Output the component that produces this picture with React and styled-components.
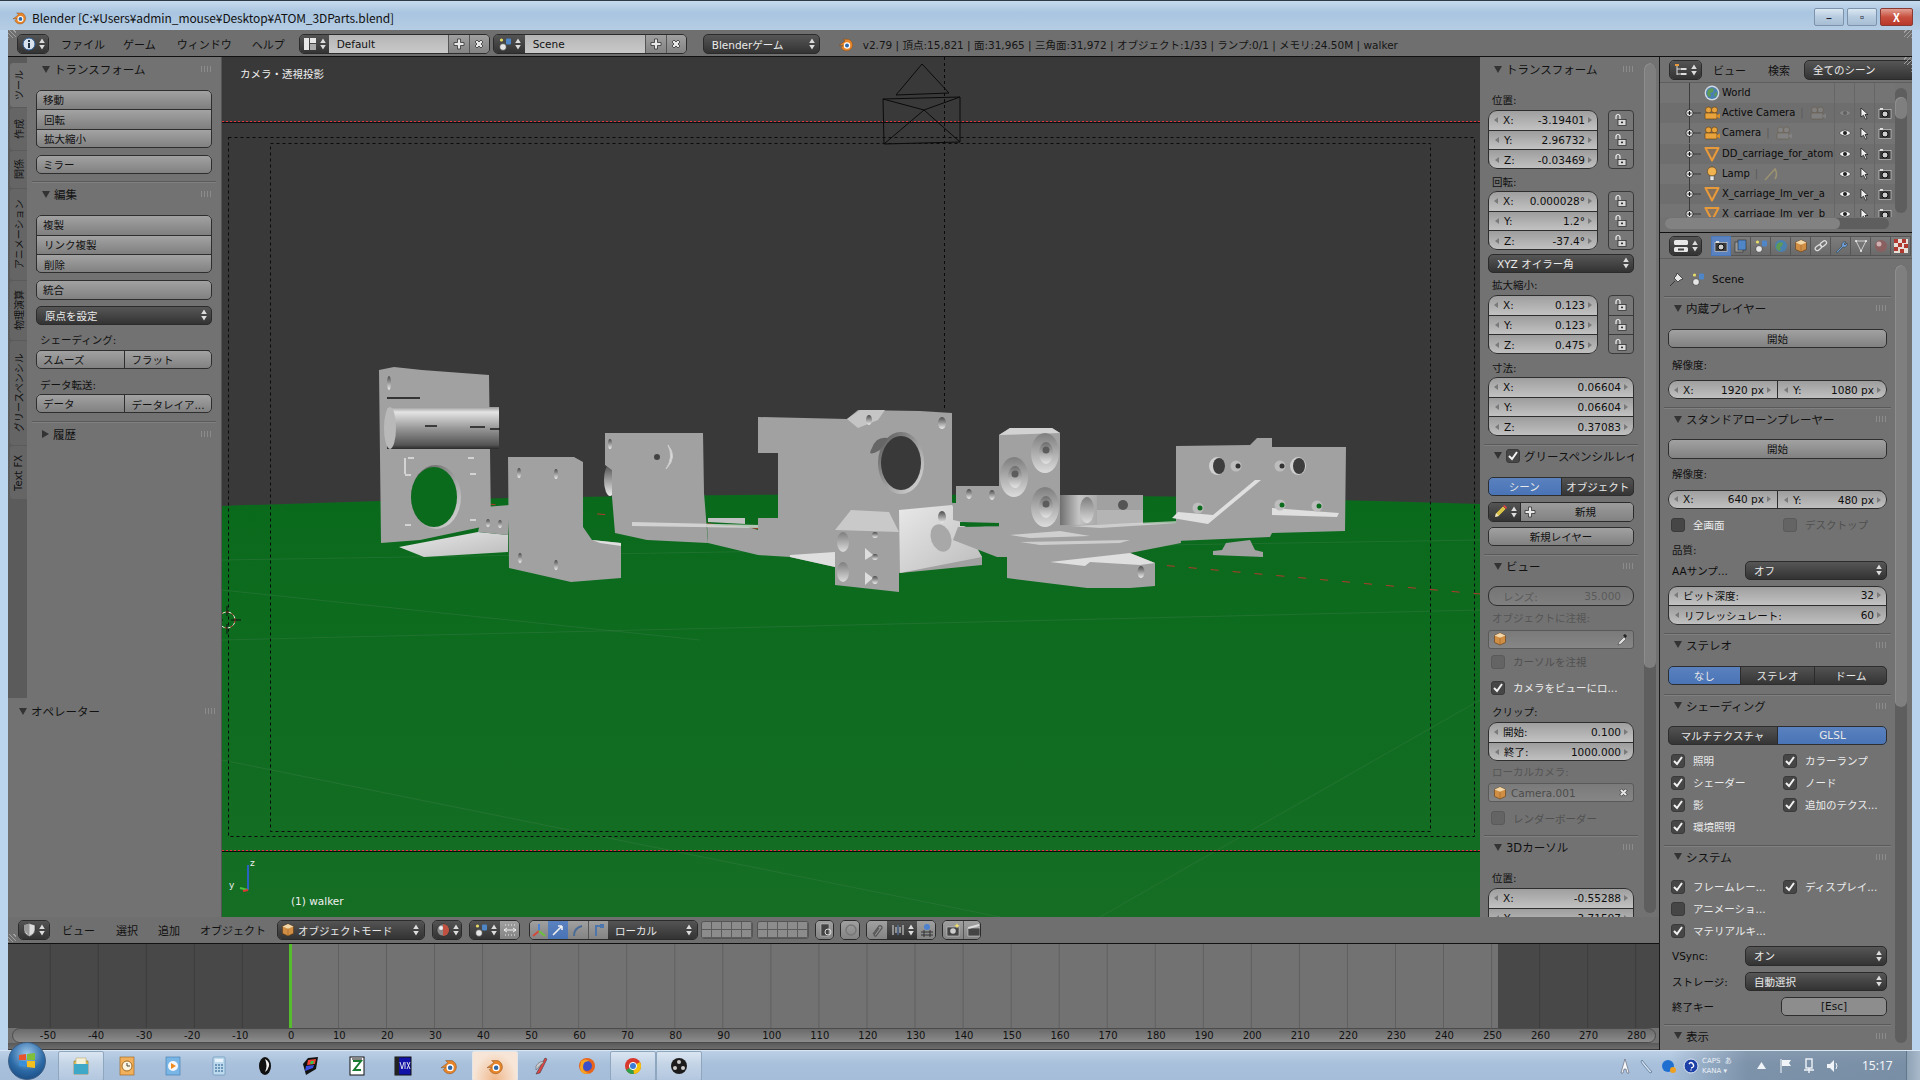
import React from 'react';
import styled, { createGlobalStyle, css } from 'styled-components';

const UI_FONT = `"DejaVu Sans", "Noto Sans CJK JP", sans-serif`;

const GlobalStyle = createGlobalStyle`
  html, body { margin: 0; padding: 0; background: #b9d1ea; }
  * { box-sizing: border-box; }
`;

const spaced = css`
  margin-top: ${p => p.$mt || 0}px;
  margin-left: ${p => p.$ml || 0}px;
`;

const Win = styled.div`
  width: 1920px;
  height: 1080px;
  display: flex;
  flex-direction: column;
  overflow: hidden;
  font-family: ${UI_FONT};
  font-size: 10.5px;
  color: #0c0c0c;
`;

const TitleBar = styled.div`
  height: 30px;
  display: flex;
  align-items: center;
  padding: 3px 0 0 12px;
  background: linear-gradient(#c6dbee, #a9c5e0 40%, #b5cde4);
  border-top: 1px solid #2e3a46;
  font-family: "Noto Sans CJK JP", sans-serif;
  font-size: 12px;
  letter-spacing: -0.1px;
  color: #111;
`;
const TitleText = styled.span`
  margin-left: 5px;
`;
const WinBtns = styled.div`
  margin-left: auto;
  margin-right: 7px;
  display: flex;
  gap: 3px;
`;
const WinBtn = styled.div`
  width: ${p => (p.$close ? '33px' : '30px')};
  height: 18px;
  display: flex;
  align-items: center;
  justify-content: center;
  border: 1px solid ${p => (p.$close ? '#8a3a30' : '#7c93ab')};
  border-radius: 2px;
  color: ${p => (p.$close ? '#fff' : '#223')};
  font-size: 11px;
  font-weight: bold;
  background: ${p => (p.$close
    ? 'linear-gradient(#e2a093, #c8503f 50%, #b8382a)'
    : 'linear-gradient(#dbe7f2, #b7cce0 50%, #a7bdd3)')};
`;

const Frame = styled.div`
  flex: 1;
  display: flex;
  padding: 0 8px;
  background: linear-gradient(90deg, #bcd5ee 8px, transparent 8px), #b8d2ee;
  min-height: 0;
`;
const Blender = styled.div`
  width: 1904px;
  display: flex;
  flex-direction: column;
  background: #727272;
`;

const HeaderBar = styled.div`
  position: relative;
  height: ${p => p.$h || 27}px;
  flex: none;
  display: flex;
  align-items: center;
  background: #6f6f6f;
  border-bottom: 1px solid #111;
  padding-top: ${p => p.$pt ?? 0}px;
`;
const Hatch = styled.div`
  position: absolute;
  width: 8px;
  height: 8px;
  ${p => p.$pos};
  background: repeating-linear-gradient(${p => p.$deg || 45}deg, #a0a0a0 0 1px, transparent 1px 3px);
`;
const Menu = styled.span`
  ${spaced};
  font-size: 11px;
  white-space: nowrap;
  color: #111;
`;
const Joined = styled.div`
  ${spaced};
  display: flex;
  height: 20px;
  width: ${p => (p.$w ? `${p.$w}px` : 'auto')};
  border: 1px solid #2b2b2b;
  border-radius: 5px;
  overflow: hidden;
  flex: none;
`;
const DarkPart = styled.div`
  flex: ${p => (p.$w ? `0 0 ${p.$w}px` : '1')};
  min-height: ${p => p.$h || 0}px;
  display: flex;
  align-items: center;
  justify-content: ${p => (p.$start ? 'flex-start' : 'center')};
  gap: 3px;
  padding: ${p => (p.$start ? '0 5px 0 3px' : '0')};
  color: #e8e8e8;
  white-space: nowrap;
  background: linear-gradient(#545454, #333);
  ${p => p.$active && 'background: linear-gradient(#5b82c0, #4873b5);'}
  ${p => p.$light && 'background: linear-gradient(#9b9b9b, #828282);'}
  & + & { border-left: 1px solid #2b2b2b; }
`;
const TextPart = styled.div`
  flex: 0 0 ${p => p.$w}px;
  display: flex;
  align-items: center;
  padding-left: 8px;
  color: #111;
  background: linear-gradient(#b5b5b5, #c9c9c9);
  border-right: 1px solid #555;
`;
const SmallPart = styled.div`
  flex: 0 0 ${p => p.$w || 20}px;
  display: flex;
  align-items: center;
  justify-content: center;
  background: linear-gradient(#a0a0a0, #838383);
  & + & { border-left: 1px solid #555; }
`;
const Dropdown = styled.div`
  ${spaced};
  flex: ${p => (p.$w ? `0 0 ${p.$w}px` : '1')};
  height: ${p => p.$h || 19}px;
  display: flex;
  align-items: center;
  gap: 4px;
  padding: 0 4px 0 8px;
  border: 1px solid #2b2b2b;
  border-radius: 5px;
  color: #eaeaea;
  white-space: nowrap;
  background: linear-gradient(#565656, #333);
`;
const DropText = styled.span`
  flex: 1;
  overflow: hidden;
`;
const Grow = styled.span`
  flex: 1;
  padding-left: ${p => p.$pl || 0}px;
`;
const LogoSlot = styled.span`
  margin-left: 18px;
  display: flex;
`;
const Stats = styled.span`
  margin-left: 9px;
  font-size: 10.5px;
  color: #151515;
  white-space: nowrap;
`;

const MainRow = styled.div`
  flex: 1;
  display: flex;
  min-height: 0;
`;
const MainCol = styled.div`
  width: 1651px;
  display: flex;
  flex-direction: column;
`;
const ViewRow = styled.div`
  height: 860px;
  display: flex;
`;

/* tool shelf */
const Shelf = styled.div`
  width: 214px;
  display: flex;
  flex-direction: column;
  background: #727272;
  border-right: 1px solid #555;
`;
const ShelfTop = styled.div`
  height: 641px;
  display: flex;
`;
const TabStrip = styled.div`
  width: 19px;
  flex: none;
  padding: 6px 0 0 2px;
  background: #5b5b5b;
  display: flex;
  flex-direction: column;
  gap: 1px;
`;
const Tab = styled.div`
  height: ${p => p.$h}px;
  flex: none;
  display: flex;
  align-items: center;
  justify-content: center;
  writing-mode: vertical-rl;
  text-orientation: sideways;
  transform: rotate(180deg);
  font-size: 10px;
  white-space: nowrap;
  border-radius: 0 3px 3px 0;
  background: ${p => (p.$active ? '#727272' : '#656565')};
  color: #111;
`;
const ShelfPanel = styled.div`
  flex: 1;
  padding: 0 ${p => p.$pad ?? 5}px;
  min-width: 0;
`;
const Section = styled.div`
  padding: 0 4px ${p => p.$pb ?? 8}px;
  ${p => !p.$last && 'border-bottom: 1px solid #5a5a5a; box-shadow: 0 1px 0 #808080;'}
`;
const Head = styled.div`
  height: ${p => p.$h || 22}px;
  display: flex;
  align-items: center;
  gap: 4px;
  padding-left: 5px;
  font-size: 11.5px;
  color: #111;
  white-space: nowrap;
  overflow: hidden;
`;
const Caret = styled.i`
  flex: none;
  width: 0;
  height: 0;
  margin-left: 1px;
  border-style: solid;
  ${p => (p.$closed
    ? 'border-width: 4px 0 4px 7px; border-color: transparent transparent transparent #333;'
    : 'border-width: 7px 4px 0 4px; border-color: #333 transparent transparent transparent;')}
`;
const Grip = styled.i`
  margin-left: auto;
  flex: none;
  width: 11px;
  height: 6px;
  margin-right: 1px;
  background-image: radial-gradient(#a5a5a5 0.7px, transparent 0.8px);
  background-size: 3px 2px;
`;

/* buttons and fields */
const Group = styled.div`
  ${spaced};
  display: flex;
  flex-direction: ${p => (p.$row ? 'row' : 'column')};
  ${p => p.$w && `width: ${p.$w}px; flex: none;`}
  ${p => p.$grow && 'flex: 1;'}
  outline: 1px solid #2e2e2e;
  outline-offset: -1px;
  border-radius: ${p => (p.$round ? 9 : 5)}px;
  overflow: hidden;
`;
const Btn = styled.div`
  flex: ${p => (p.$v ? '1 1 0' : 'none')};
  height: ${p => p.$h || 19.33}px;
  min-width: 0;
  display: flex;
  align-items: center;
  justify-content: ${p => (p.$center ? 'center' : 'flex-start')};
  padding: 0 7px;
  white-space: nowrap;
  overflow: hidden;
  color: #111;
  background: ${p => (p.$flat ? '#8d8d8d' : 'linear-gradient(#a3a3a3, #7f7f7f)')};
  & + & {
    ${p => (p.$v ? 'border-left: 1px solid #2e2e2e;' : 'border-top: 1px solid #2e2e2e;')}
  }
`;
const Num = styled.div`
  flex: ${p => (p.$v ? '1 1 0' : 'none')};
  height: ${p => p.$h || 19.67}px;
  min-width: 0;
  display: flex;
  align-items: center;
  padding: 0 3px;
  white-space: nowrap;
  color: ${p => (p.$off ? '#5a5a5a' : '#0e0e0e')};
  background: ${p => (p.$off
    ? 'linear-gradient(#757575, #808080)'
    : 'linear-gradient(#9d9d9d, #c2c2c2)')};
  & + & {
    ${p => (p.$v ? 'border-left: 1px solid #2e2e2e;' : 'border-top: 1px solid #2e2e2e;')}
  }
`;
const NumArrow = styled.i`
  flex: none;
  width: 0;
  height: 0;
  margin: 0 3px;
  border-style: solid;
  ${p => (p.$right
    ? 'border-width: 3px 0 3px 4px; border-color: transparent transparent transparent #7a7a7a;'
    : 'border-width: 3px 4px 3px 0; border-color: transparent #7a7a7a transparent transparent;')}
`;
const NumLabel = styled.span`
  margin-left: 2px;
`;
const NumValue = styled.span`
  margin-left: auto;
`;
const Label = styled.div`
  ${spaced};
  height: 14px;
  line-height: 14px;
  padding-left: 4px;
  color: ${p => (p.$off ? '#555' : '#111')};
  white-space: nowrap;
`;
const FieldRow = styled.div`
  ${spaced};
  display: flex;
  gap: ${p => p.$gap ?? 10}px;
  align-items: ${p => (p.$center ? 'center' : 'flex-start')};
`;
const RowLabel = styled.div`
  flex: 0 0 ${p => p.$w}px;
  padding-left: 4px;
  white-space: nowrap;
`;
const LockCol = styled.div`
  flex: 0 0 26px;
  display: flex;
  flex-direction: column;
  outline: 1px solid #3a3a3a;
  outline-offset: -1px;
  border-radius: 4px;
  overflow: hidden;
`;
const LockCell = styled.div`
  height: 19.67px;
  flex: none;
  display: flex;
  align-items: center;
  justify-content: center;
  background: #777;
  & + & { border-top: 1px solid #3a3a3a; }
`;
const IdField = styled.div`
  ${spaced};
  height: 19px;
  display: flex;
  align-items: center;
  gap: 4px;
  padding: 0 4px;
  color: #4c4c4c;
  border: 1px solid #5a5a5a;
  border-radius: 3px;
  background: linear-gradient(#7a7a7a, #868686);
`;
const PushRight = styled.span`
  margin-left: auto;
  display: flex;
`;
const CheckRow = styled.div`
  ${spaced};
  height: 18px;
  display: flex;
  align-items: center;
  gap: 8px;
  padding-left: 3px;
  white-space: nowrap;
  color: ${p => (p.$off ? '#505050' : '#ececec')};
`;
const Box = styled.span`
  flex: none;
  width: 14px;
  height: 14px;
  display: flex;
  align-items: center;
  justify-content: center;
  border-radius: 3px;
  background: ${p => (p.$off ? '#646464' : '#464646')};
  border: 1px solid ${p => (p.$off ? '#5a5a5a' : '#3a3a3a')};
`;
const CheckGrid = styled.div`
  ${spaced};
  display: grid;
  grid-template-columns: 112px 1fr;
  row-gap: 4px;
`;
const NewBtnText = styled.span`
  margin-left: 36px;
  color: #111;
`;

/* viewport */
const Viewport = styled.div`
  position: relative;
  width: 1258px;
  flex: none;
  background: #393939;
  overflow: hidden;
`;
const Scene3D = styled.svg`
  display: block;
`;
const ViewCaption = styled.div`
  position: absolute;
  left: ${p => p.$x}px;
  top: ${p => p.$y}px;
  color: #f0f0f0;
  font-size: 10.5px;
  white-space: nowrap;
`;

/* right side panels */
const NPanel = styled.div`
  width: 179px;
  display: flex;
  overflow: hidden;
  background: #727272;
`;
const NContent = styled.div`
  width: 164px;
  flex: none;
  height: 860px;
  padding: 0 6px 0 4px;
  overflow: hidden;
`;
const VScroll = styled.div`
  flex: none;
  width: 12px;
  margin-top: ${p => p.$top}px;
  height: ${p => p.$track}px;
  border-radius: 6px;
  background: #5e5e5e;
  overflow: hidden;
`;
const VThumb = styled.div`
  height: ${p => p.$h}px;
  margin-top: ${p => p.$top || 0}px;
  border-radius: 6px;
  background: #7f7f7f;
  box-shadow: inset 1px 1px 0 #8d8d8d;
`;
const RightCol = styled.div`
  width: 253px;
  display: flex;
  flex-direction: column;
  border-left: 1px solid #1a1a1a;
  background: #727272;
`;
const Outliner = styled.div`
  height: 176px;
  flex: none;
  display: flex;
  flex-direction: column;
  border-bottom: 1px solid #111;
`;
const OutHeader = styled.div`
  position: relative;
  height: 26px;
  flex: none;
  display: flex;
  align-items: center;
  padding-left: 9px;
  overflow: hidden;
  border-bottom: 1px solid #5e5e5e;
`;
const OutBody = styled.div`
  display: flex;
  height: 134px;
  flex: none;
`;
const OutRows = styled.div`
  width: 235px;
  flex: none;
  overflow: hidden;
`;
const OutRow = styled.div`
  height: 20.2px;
  display: flex;
  align-items: center;
  background: ${p => (p.$odd ? '#747474' : '#6e6e6e')};
`;
const Tree = styled.div`
  flex: none;
  width: 42px;
  height: 100%;
`;
const OutIcon = styled.div`
  flex: none;
  width: 21px;
  height: 100%;
  display: flex;
  align-items: center;
  justify-content: center;
  margin-left: -1px;
`;
const OutName = styled.div`
  width: 112px;
  flex: none;
  display: flex;
  align-items: center;
  gap: 5px;
  line-height: 16px;
  white-space: nowrap;
  overflow: hidden;
  font-size: 10px;
  color: #0a0a0a;
`;
const OutSep = styled.span`
  color: #5a5a5a;
`;
const Restrict = styled.div`
  flex: none;
  width: 20px;
  height: 100%;
  display: flex;
  align-items: center;
  justify-content: center;
  border-left: 1px solid #666;
`;
const HScroll = styled.div`
  margin: 1px 0 0 5px;
  width: 224px;
  height: 11px;
  border-radius: 6px;
  background: #5e5e5e;
`;
const HThumb = styled.div`
  width: 175px;
  height: 100%;
  border-radius: 6px;
  background: #828282;
`;
const PropTabs = styled.div`
  display: flex;
  margin-left: 9px;
`;
const PropTab = styled.div`
  width: 20px;
  height: 20px;
  display: flex;
  align-items: center;
  justify-content: center;
  border: 1px solid ${p => (p.$active ? '#4a78bd' : '#555')};
  border-left-width: ${p => (p.$active ? 1 : 0)}px;
  background: ${p => (p.$active ? '#5b82c0' : 'linear-gradient(#7c7c7c, #6a6a6a)')};
`;
const PropBody = styled.div`
  flex: 1;
  display: flex;
  min-height: 0;
`;
const PropContent = styled.div`
  width: 235px;
  flex: none;
  overflow: hidden;
  padding: 0 4px;
`;
const SceneRow = styled(Section)`
  height: 38px;
  display: flex;
  align-items: center;
  gap: 6px;
  padding: 2px 4px 0 5px;
`;
const SceneName = styled.span`
  margin-left: 1px;
`;

/* timeline */
const Timeline = styled.div`
  height: 84px;
  flex: none;
  display: flex;
  background-color: #727272;
  background-image: linear-gradient(90deg, #5f5f5f 1px, transparent 1px);
  background-size: 48.05px 100%;
  background-position: 41.7px 0;
`;
const OutRange = styled.div`
  flex: ${p => (p.$w ? `0 0 ${p.$w}px` : '1')};
  background: ${p => (p.$clear ? 'transparent' : 'rgba(0, 0, 0, 0.37)')};
`;
const FrameLine = styled.div`
  flex: 0 0 3px;
  background: #55bd2b;
`;
const Ruler = styled.div`
  height: 15px;
  flex: none;
  margin: 0 3px 0 4px;
  display: flex;
  align-items: center;
  padding-left: 14px;
  border: 1px solid #4c4c4c;
  border-radius: 8px;
  background: linear-gradient(#6a6a6a, #8c8c8c);
  overflow: hidden;
`;
const Tick = styled.span`
  flex: 0 0 48.05px;
  text-align: center;
  font-size: 10px;
  color: #111;
  padding-right: ${p => (p.$neg ? 6 : 0)}px;
`;
const BottomScroll = styled.div`
  height: 7px;
  flex: none;
  background: linear-gradient(#5a5a5a, #6c6c6c);
  border-bottom: 1px solid #3b3b3b;
`;
const LayerGrid = styled.div`
  ${spaced};
  display: grid;
  grid-template-columns: repeat(5, 10px);
  grid-auto-rows: 8px;
  border: 1px solid #555;
  border-radius: 3px;
  overflow: hidden;
`;
const LayerCell = styled.div`
  background: #8c8c8c;
  border: 1px solid #5c5c5c;
  border-width: 0 1px 1px 0;
`;

/* taskbar */
const Taskbar = styled.div`
  height: 30px;
  flex: none;
  display: flex;
  align-items: center;
  padding-left: 8px;
  border-top: 1px solid #d8e6f3;
  background: linear-gradient(90deg, transparent 87%, rgba(90, 110, 130, 0.55) 91%, rgba(90, 110, 130, 0.6) 100%),
    linear-gradient(#bcd0e6, #a8c0db 45%, #a5bdd9);
`;
const StartOrb = styled.div`
  width: 38px;
  height: 38px;
  flex: none;
  margin: -9px 12px 0 0;
  display: flex;
  align-items: center;
  justify-content: center;
  border-radius: 50%;
  border: 1px solid #3d5f86;
  background: radial-gradient(circle at 50% 30%, #9cc6ea, #2c6aa6 55%, #143f72);
`;
const TaskItem = styled.div`
  width: 46px;
  height: 30px;
  flex: none;
  display: flex;
  align-items: center;
  justify-content: center;
  ${p => p.$open && `
    border: 1px solid #8fa6bf;
    border-radius: 2px;
    background: linear-gradient(rgba(255,255,255,.45), rgba(255,255,255,.15));
  `}
  ${p => p.$active && `
    border: 1px solid #e5e5e5;
    border-radius: 2px;
    background: radial-gradient(ellipse at 50% 100%, #f0b88c, #f7e6d8 70%);
  `}
`;
const Tray = styled.div`
  margin-left: auto;
  display: flex;
  align-items: center;
  height: 100%;
  padding-left: 8px;
`;
const TrayIcon = styled.div`
  flex: 0 0 ${p => p.$w || 22}px;
  display: flex;
  justify-content: center;
`;
const TrayText = styled.div`
  flex: none;
  width: 47px;
  font-family: "DejaVu Sans", "Noto Sans CJK JP", sans-serif;
  font-size: 7px;
  line-height: 10px;
  color: #eaf0f6;
`;
const Clock = styled.div`
  flex: none;
  margin-left: 18px;
  width: 44px;
  font-family: "Noto Sans", sans-serif;
  font-size: 12px;
  color: #f2f5f8;
`;
const ShowDesktop = styled.div`
  flex: none;
  width: 14px;
  height: 100%;
  border-left: 1px solid #64778a;
  background: linear-gradient(90deg, #8fa3b6, #a8b9ca);
`;

/* ---- icons ---- */
const UpDown = ({ c = '#dcdcdc' }) => (
  <svg width="6" height="12" viewBox="0 0 6 12" style={{ flex: 'none' }}>
    <path d="M3 0.5L5.8 5H.2Z M3 11.5L5.8 7H.2Z" fill={c} />
  </svg>
);
const PlusIco = () => (
  <svg width="12" height="12" viewBox="0 0 12 12"><path d="M4.5 1h3v3.5H11v3H7.5V11h-3V7.5H1v-3h3.5Z" fill="#e8e8e8" stroke="#333" strokeWidth=".8" /></svg>
);
const CrossIco = ({ s = 12 }) => (
  <svg width={s} height={s} viewBox="0 0 12 12"><path d="M2 4l2-2 2 2 2-2 2 2-2 2 2 2-2 2-2-2-2 2-2-2 2-2Z" fill="#e8e8e8" stroke="#333" strokeWidth=".8" /></svg>
);
const BlenderLogo = ({ s = 16 }) => (
  <svg width={s} height={s} viewBox="0 0 16 16">
    <path d="M1 9.5L7 5 5 3.2h5.5a6 6 0 1 1-7.5 8L5.5 9.2Z" fill="#e8852a" stroke="#7a4310" strokeWidth=".4" />
    <circle cx="9" cy="9.5" r="3.2" fill="#fff" />
    <circle cx="9" cy="9.5" r="2" fill="#2f68a8" />
  </svg>
);
const InfoIco = () => (
  <svg width="14" height="14" viewBox="0 0 14 14"><circle cx="7" cy="7" r="6" fill="#d8e2ee" stroke="#2d5c96" /><rect x="6" y="6" width="2" height="5" fill="#234" /><rect x="6" y="3" width="2" height="2" fill="#234" /></svg>
);
const LayoutIco = () => (
  <svg width="14" height="14" viewBox="0 0 14 14"><rect x="1" y="1" width="5" height="12" fill="#e8e8e8" /><rect x="7" y="1" width="6" height="5" fill="#e8e8e8" /><rect x="7" y="7" width="6" height="6" fill="#aaa" /></svg>
);
const SceneIco = ({ s = 14 }) => (
  <svg width={s} height={s} viewBox="0 0 14 14"><circle cx="3.5" cy="3" r="1.6" fill="#e8dc66" /><rect x="8" y="1.5" width="5" height="6" rx="1" fill="#4f86c8" /><circle cx="5" cy="10" r="3.4" fill="#e6e6e6" stroke="#222" strokeWidth=".6" /></svg>
);
const Cube = ({ s = 14 }) => (
  <svg width={s} height={s} viewBox="0 0 14 14"><path d="M7 1l5.5 2.4v7L7 13 1.5 10.4v-7Z" fill="#d18e45" stroke="#5e3a12" strokeWidth=".6" /><path d="M1.5 3.4L7 5.8l5.5-2.4L7 1Z" fill="#f2d7a8" /><path d="M7 5.8V13" stroke="#8a5a20" strokeWidth=".5" /></svg>
);
const Lock = () => (
  <svg width="14" height="14" viewBox="0 0 14 14"><path d="M2 6V3.5a2 2 0 0 1 4 0V6" fill="none" stroke="#eee" strokeWidth="1.2" /><rect x="4" y="6.5" width="8" height="6" fill="#d9d9d9" stroke="#222" strokeWidth=".7" /><rect x="7" y="8.6" width="2" height="1.6" fill="#333" /></svg>
);
const Pencil = () => (
  <svg width="16" height="16" viewBox="0 0 16 16"><path d="M3 13l1-4 7-7 3 3-7 7Z" fill="#d9c24a" stroke="#333" strokeWidth=".6" /><path d="M11 2l3 3 1-1.5L12.5 1Z" fill="#d44" /><path d="M3 13l1-4 3 3Z" fill="#f4e6c4" /></svg>
);
const Dropper = () => (
  <svg width="12" height="14" viewBox="0 0 12 14"><path d="M1 13l1-3 5-5 2 2-5 5Z" fill="#ddd" stroke="#333" strokeWidth=".5" /><path d="M8 2l2 2-1.5 2-2.5-2.5Z" fill="#222" /></svg>
);
const CheckMark = () => (
  <svg width="12" height="12" viewBox="0 0 12 12"><path d="M2 6l3 3 5-7" fill="none" stroke="#f2f2f2" strokeWidth="2" /></svg>
);
const Eye = ({ off }) => (
  <svg width="14" height="10" viewBox="0 0 14 10" opacity={off ? 0.18 : 1}><path d="M1 5q6-6 12 0q-6 6-12 0Z" fill="#f0f0f0" stroke="#333" strokeWidth=".6" /><circle cx="7" cy="5" r="2" fill="#222" /></svg>
);
const Cursor = () => (
  <svg width="10" height="13" viewBox="0 0 10 13"><path d="M1 1l7 6.5H5l2 4-1.5.7-2-4L1 10Z" fill="#f0f0f0" stroke="#111" strokeWidth=".7" /></svg>
);
const RenderCam = () => (
  <svg width="14" height="12" viewBox="0 0 14 12"><rect x="1" y="2.5" width="12" height="9" fill="#3a3a3a" stroke="#ddd" strokeWidth=".6" /><circle cx="7" cy="7" r="3" fill="#cfcfcf" stroke="#111" /><rect x="2" y="1" width="3" height="2" fill="#ddd" /></svg>
);
const Globe = () => (
  <svg width="16" height="16" viewBox="0 0 16 16"><circle cx="8" cy="8" r="7.4" fill="#d0d8e2" /><circle cx="8" cy="8" r="6" fill="#4a80b0" /><path d="M4 5q3-3 6-1l-1 3-3 1 1 3-2 1-2-3ZM10 9l3-2 0 3-2 2Z" fill="#5f9a55" /></svg>
);
const VideoCam = ({ dim }) => (
  <svg width="18" height="15" viewBox="0 0 18 15" opacity={dim ? 0.4 : 1} style={{ flex: 'none' }}><circle cx="5.5" cy="4" r="3" fill={dim ? '#999' : '#e8a33c'} stroke="#5c3a10" strokeWidth=".6" /><circle cx="11.5" cy="4" r="3" fill={dim ? '#999' : '#e8a33c'} stroke="#5c3a10" strokeWidth=".6" /><rect x="2" y="7" width="12" height="6" rx="1" fill={dim ? '#999' : '#e8a33c'} stroke="#5c3a10" strokeWidth=".6" /><path d="M14 9l3-1.5v5L14 11Z" fill={dim ? '#999' : '#d88f2a'} /></svg>
);
const MeshTri = () => (
  <svg width="16" height="16" viewBox="0 0 16 16"><path d="M1.5 2h13L8 14.5Z" fill="#b9742a" fillOpacity=".25" stroke="#e89a3a" strokeWidth="2" strokeLinejoin="round" /></svg>
);
const Bulb = () => (
  <svg width="12" height="16" viewBox="0 0 12 16"><circle cx="6" cy="5.5" r="4.6" fill="#f0b350" stroke="#5c3a10" strokeWidth=".6" /><rect x="4" y="10" width="4" height="4.5" fill="#e6e6e6" stroke="#444" strokeWidth=".5" /></svg>
);
const Bow = () => (
  <svg width="16" height="16" viewBox="0 0 16 16" opacity=".5" style={{ flex: 'none' }}><path d="M2 14L12 3q3 5 0 10" fill="none" stroke="#c0b070" strokeWidth="1.6" /></svg>
);
const ExpandPlus = () => (
  <svg width="42" height="20" viewBox="0 0 42 20" style={{ display: 'block' }}>
    <path d="M29.5 0V20" stroke="#3c3c3c" />
    <path d="M33 10H41" stroke="#3c3c3c" />
    <circle cx="29.5" cy="10" r="3.6" fill="#e2e2e2" stroke="#222" strokeWidth=".8" />
    <path d="M27.5 10h4M29.5 8v4" stroke="#111" />
  </svg>
);
const TreeLine = () => (
  <svg width="42" height="20" viewBox="0 0 42 20" style={{ display: 'block' }}>
    <path d="M29.5 0V20" stroke="#3c3c3c" />
  </svg>
);
const Pin = () => (
  <svg width="16" height="16" viewBox="0 0 16 16"><path d="M1 15l5-5M5 7l4 4 2-2 3-1-6-6-1 3Z" fill="#e8e8e8" stroke="#222" strokeWidth=".7" /></svg>
);
const OutlinerIco = () => (
  <svg width="14" height="14" viewBox="0 0 14 14"><rect x="1" y="1" width="4" height="2" fill="#e89a3a" /><path d="M3 3v9M3 6h3M3 11h3" stroke="#ddd" /><rect x="6.5" y="5" width="6" height="2" fill="#ddd" /><rect x="6.5" y="10" width="6" height="2" fill="#ddd" /></svg>
);
const PropsIco = () => (
  <svg width="16" height="14" viewBox="0 0 16 14"><rect x="1" y="1" width="14" height="5" rx="1.5" fill="#e8e8e8" /><rect x="1" y="8" width="14" height="5" rx="1.5" fill="#e8e8e8" /><rect x="5" y="9.5" width="6" height="2" fill="#444" /></svg>
);

const PROP_TABS = [
  <RenderCam key="a" />,
  <svg key="b" width="14" height="14" viewBox="0 0 14 14"><rect x="1" y="3" width="8" height="10" fill="#999" stroke="#222" strokeWidth=".5" /><rect x="4" y="1" width="8" height="10" fill="#4f86c8" stroke="#222" strokeWidth=".5" /></svg>,
  <SceneIco key="c" />,
  <svg key="d" width="14" height="14" viewBox="0 0 14 14"><circle cx="7" cy="7" r="6" fill="#4a80b0" /><path d="M3 5q3-3 6-1L8 7 6 8l1 3-2 1-3-3Z" fill="#5f9a55" /></svg>,
  <Cube key="e" />,
  <svg key="f" width="14" height="14" viewBox="0 0 14 14" fill="none" stroke="#ddd" strokeWidth="1.3"><rect x="1" y="7" width="7" height="4" rx="2" transform="rotate(-40 4 9)" /><rect x="6" y="3" width="7" height="4" rx="2" transform="rotate(-40 9 5)" /></svg>,
  <svg key="g" width="14" height="14" viewBox="0 0 14 14"><path d="M2 13l6-6a3 3 0 0 1 4-4L10 5l1 1 2-2a3 3 0 0 1-4 4l-6 6Z" fill="#6d9ed6" stroke="#222" strokeWidth=".4" /></svg>,
  <svg key="h" width="14" height="14" viewBox="0 0 14 14"><path d="M2 2h10L7 12Z" fill="none" stroke="#cfcfcf" /><circle cx="2" cy="2" r="1" fill="#eee" /><circle cx="12" cy="2" r="1" fill="#eee" /><circle cx="7" cy="12" r="1" fill="#eee" /></svg>,
  <svg key="i" width="14" height="14" viewBox="0 0 14 14"><circle cx="7" cy="7" r="6" fill="#8a5f5f" /><circle cx="5" cy="5" r="2.5" fill="#d0b0b0" /></svg>,
  <svg key="j" width="14" height="14" viewBox="0 0 14 14"><rect width="14" height="14" fill="#e6e0d8" /><path d="M0 0h4v4H0ZM8 0h4v4H8ZM4 4h4v4H4ZM10 5h4v4h-4ZM0 8h4v4H0ZM6 10h4v4H6Z" fill="#b03a30" /></svg>,
];

/* ---- 3D scene ---- */
const PART = '#a1a1a1';
const LIT = '#dfdfdf';
const ScrewHole = ({ x, y, rx = 3, ry = 6 }) => <ellipse cx={x} cy={y} rx={rx} ry={ry} fill="url(#holeV)" />;
const Counter = ({ x, y }) => (
  <g>
    <ellipse cx={x} cy={y} rx={14} ry={20} fill="url(#coneG)" />
    <ellipse cx={x + 1} cy={y} rx={7} ry={11} fill="url(#coneG2)" />
    <ellipse cx={x + 1} cy={y - 3} rx={3.5} ry={3.5} fill="#5c5c5c" />
  </g>
);

const Scene = () => (
  <Scene3D width="1258" height="860" viewBox="222 57 1258 860">
    <defs>
      <linearGradient id="ground" x1="0" y1="0" x2="0" y2="1">
        <stop offset="0" stopColor="#0a6a1c" />
        <stop offset="1" stopColor="#156e24" />
      </linearGradient>
      <linearGradient id="cylV" x1="0" y1="0" x2="0" y2="1">
        <stop offset="0" stopColor="#999" />
        <stop offset=".12" stopColor="#e4e4e4" />
        <stop offset=".5" stopColor="#999" />
        <stop offset=".9" stopColor="#555" />
        <stop offset="1" stopColor="#2b2b2b" />
      </linearGradient>
      <linearGradient id="cylH" x1="0" y1="0" x2="1" y2="0">
        <stop offset="0" stopColor="#707070" />
        <stop offset=".5" stopColor="#c4c4c4" />
        <stop offset="1" stopColor="#a8a8a8" />
      </linearGradient>
      <linearGradient id="holeV" x1="0" y1="0" x2="0" y2="1">
        <stop offset="0" stopColor="#4c4c4c" />
        <stop offset="1" stopColor="#ececec" />
      </linearGradient>
      <linearGradient id="coneG" x1="0" y1="0" x2="0" y2="1">
        <stop offset="0" stopColor="#7e7e7e" />
        <stop offset="1" stopColor="#dcdcdc" />
      </linearGradient>
      <linearGradient id="coneG2" x1="0" y1="0" x2="0" y2="1">
        <stop offset="0" stopColor="#6c6c6c" />
        <stop offset="1" stopColor="#e4e4e4" />
      </linearGradient>
      <linearGradient id="crescent" x1="0" y1="0" x2="1" y2="1">
        <stop offset="0" stopColor="#555" />
        <stop offset="1" stopColor="#e0e0e0" />
      </linearGradient>
      <linearGradient id="saddle" x1="0" y1="0" x2="1" y2="1">
        <stop offset="0" stopColor="#e8e8e8" />
        <stop offset="1" stopColor="#bcbcbc" />
      </linearGradient>
    </defs>

    <path d="M222 506 Q 850 484 1480 504 V917 H222Z" fill="url(#ground)" />

    {/* floor grid */}
    <g stroke="#3f7d48" strokeWidth="1" strokeOpacity=".4" fill="none">
      <path d="M222 560L1480 540M222 640L1480 610M222 760L1000 917M700 640L222 590M1480 700L1100 917" />
    </g>
    <path d="M400 496L1480 594" stroke="#b23a2c" strokeDasharray="8 14" />

    {/* camera frames */}
    <g fill="none" stroke="#0a0a0a" strokeDasharray="3 3">
      <rect x="228.5" y="137.5" width="1246" height="699" />
      <rect x="270.5" y="143.5" width="1160" height="688" />
      <path d="M944.5 57V410" />
    </g>
    <path d="M222 122.500H1480M222 851.500H1480" stroke="#0c0c0c" />
    <path d="M222 121.500H1480M222 850.500H1480" stroke="#e0343c" strokeDasharray="2 2" />

    {/* camera object */}
    <g fill="none" stroke="#0a0a0a">
      <path d="M922 64L896 95L949 93Z" />
      <path d="M883 99L960 97L960 142L884 144Z" />
      <path d="M883 99L924 110L960 97M884 144L924 110L960 142" />
    </g>

    {/* left plate */}
    <polygon points="379,370 394,367 422,370 489,375 491,525 420,540 381,543" fill={PART} />
    <ScrewHole x={389} y={383} rx={2} ry={7} />
    <path d="M387 398H420" stroke="#111" strokeWidth="1.5" />
    <rect x="387" y="407" width="112" height="42" fill="url(#cylV)" />
    <ellipse cx="390" cy="428" rx="6" ry="21" fill="#b9b9b9" />
    <path d="M425 426H437M470 427H485M490 429H500" stroke="#1a1a1a" strokeWidth="1.4" />
    <ellipse cx="436" cy="497" rx="25" ry="32" fill="url(#crescent)" />
    <ellipse cx="434" cy="497" rx="23" ry="30" fill="#0b6b1d" />
    <path d="M405 458V474M408 458h6M468 458h6M405 475h6M470 474h6M405 525h6M470 520h6" stroke="#e3e3e3" strokeWidth="1.5" />
    <polygon points="399,547 478,532 508,535 508,552 424,557" fill="url(#saddle)" />
    <polygon points="484,507 510,505 508,535 478,532" fill={PART} />
    <ScrewHole x={488} y={523} rx={2} ry={4} />
    <ScrewHole x={500} y={524} rx={2} ry={4} />

    {/* L bracket */}
    <polygon points="508,457 574,457 583,462 583,527 592,540 621,543 621,578 571,582 509,568" fill={PART} />
    <polygon points="592,540 621,543 621,546 600,543" fill={LIT} />
    <ScrewHole x={519} y={473} rx={2} ry={5} />
    <ScrewHole x={556} y={474} rx={2} ry={5} />
    <ScrewHole x={520} y={558} rx={2} ry={5} />
    <ScrewHole x={556} y={565} rx={2} ry={5} />

    {/* back plate */}
    <ellipse cx="610" cy="480" rx="6" ry="16" fill="url(#holeV)" />
    <polygon points="605,433 703,433 704,493 708,543 647,540 615,533 612,497 612,470 605,465" fill={PART} />
    <ScrewHole x={610} y={444} rx={2} ry={5} />
    <path d="M668 445q10 12 -2 24q8 -12 2 -24" fill="#ddd" stroke="#ccc" />
    <circle cx="657" cy="457" r="3" fill="#444" />

    <polygon points="707,525 748,527 758,530 758,555 708,543" fill={PART} />
    <polygon points="632,522 760,525 760,528 632,526" fill={LIT} opacity=".8" />
    <polygon points="708,518 745,518 745,524 708,522" fill="#c2c2c2" />

    {/* big bearing block */}
    <polygon points="758,417 847,419 858,410 920,411 952,413 952,502 982,557 982,565 900,573 835,567 790,557 758,555 758,518 778,518 778,453 758,453" fill={PART} />
    <ellipse cx="901" cy="463" rx="23" ry="31" fill="url(#crescent)" />
    <ellipse cx="901" cy="463" rx="20" ry="27" fill="#393939" />
    <path d="M860 410L847 419L858 428L878 420L885 410Z" fill="#c5c5c5" />
    <ellipse cx="869" cy="420" rx="3" ry="5" fill="url(#holeV)" />
    <ellipse cx="942" cy="423" rx="4" ry="6" fill="url(#holeV)" />
    <path d="M880 450q-14 8 -8 -2q4 -12 16 -10" fill="#666" />
    <polygon points="899,510 952,505 982,557 900,573" fill="url(#saddle)" />
    <ellipse cx="942" cy="517" rx="4" ry="6" fill="url(#holeV)" />
    <ellipse cx="941" cy="538" rx="10" ry="14" fill="#a8a8a8" transform="rotate(-20 941 538)" />
    <polygon points="790,555 835,552 835,567 790,557" fill={LIT} />

    {/* small block */}
    <polygon points="835,530 851,510 889,512 899,532 899,592 835,585" fill={PART} />
    <polygon points="835,530 851,510 889,512 899,532" fill="#c9c9c9" />
    <ellipse cx="843" cy="542" rx="6" ry="10" fill="url(#coneG)" />
    <ellipse cx="843" cy="572" rx="6" ry="10" fill="url(#coneG)" />
    <ScrewHole x={875} y={535} rx={3} ry={3} />
    <ScrewHole x={875} y={557} rx={3} ry={3} />
    <polygon points="865,548 873,555 865,560" fill="#ddd" />
    <polygon points="865,572 873,578 865,585" fill="#ddd" />
    <ellipse cx="875" cy="580" rx="3" ry="4" fill="url(#holeV)" />

    {/* middle stuff */}
    <polygon points="956,486 999,486 999,503 956,503" fill={PART} />
    <ellipse cx="969" cy="494" rx="3" ry="5" fill="url(#holeV)" />
    <ellipse cx="992" cy="495" rx="3" ry="5" fill="url(#holeV)" />
    <polygon points="953,503 1000,503 1000,530 953,520" fill={PART} />
    <polygon points="960,522 1000,523 1000,527 960,526" fill="#0b6b1d" />
    <rect x="1060" y="495" width="38" height="32" fill="url(#cylH)" />
    <ellipse cx="1087" cy="510" rx="7" ry="13" fill="url(#coneG)" />
    <polygon points="1097,495 1143,495 1143,510 1097,510" fill={PART} />
    <ellipse cx="1123" cy="505" rx="5" ry="5" fill="#555" />
    <polygon points="1097,510 1143,510 1143,525 1097,525" fill="#b4b4b4" />
    <polygon points="958,527 1180,523 1181,543 1130,553 1007,557 997,557 953,540" fill={PART} />
    <polygon points="1010,535 1060,531 1090,536 1030,538" fill={LIT} opacity=".75" />
    <polygon points="1070,526 1178,521 1180,523 1100,528" fill={LIT} opacity=".7" />
    <polygon points="1020,542 1130,540 1120,543 1040,545" fill={LIT} opacity=".7" />
    <polygon points="1007,543 1130,553 1155,563 1155,586 1130,588 1087,588 1007,578" fill={PART} />
    <polygon points="1050,562 1130,553 1155,563 1140,565 1090,562 1085,566" fill={LIT} />
    <ellipse cx="1141" cy="572" rx="3.5" ry="6" fill="url(#holeV)" />

    {/* tall block */}
    <polygon points="999,435 1010,428 1052,428 1060,433 1060,528 999,527" fill={PART} />
    <polygon points="999,435 1010,428 1052,428 1060,433" fill="#d2d2d2" />
    <Counter x={1014} y={477} />
    <Counter x={1045} y={453} />
    <Counter x={1045} y={507} />

    {/* right plates */}
    <polygon points="1176,446 1250,445 1257,438 1272,438 1272,447 1346,447 1345,531 1272,533 1270,537 1176,541" fill={PART} />
    <polygon points="1172,518 1178,512 1213,515 1255,480 1261,480 1208,524" fill={LIT} />
    <polygon points="1272,508 1339,513 1337,517 1272,515" fill={LIT} />
    <ellipse cx="1217" cy="466" rx="8" ry="9" fill="#d0d0d0" />
    <ellipse cx="1219" cy="466" rx="6" ry="8" fill="#3d3d3d" />
    <ellipse cx="1298" cy="466" rx="8" ry="9" fill="#d0d0d0" />
    <ellipse cx="1299" cy="466" rx="6" ry="8" fill="#3d3d3d" />
    <circle cx="1236" cy="466" r="5.5" fill="#bdbdbd" />
    <circle cx="1238" cy="466" r="2.5" fill="#333" />
    <circle cx="1280" cy="466" r="5.5" fill="#bdbdbd" />
    <circle cx="1282" cy="466" r="2.5" fill="#333" />
    <circle cx="1198" cy="508" r="5.5" fill="#bdbdbd" />
    <circle cx="1200" cy="508" r="2.5" fill="#0b6b1d" />
    <circle cx="1280" cy="505" r="5.5" fill="#bdbdbd" />
    <circle cx="1282" cy="505" r="2.5" fill="#0b6b1d" />
    <circle cx="1317" cy="506" r="5.5" fill="#bdbdbd" />
    <circle cx="1319" cy="506" r="2.5" fill="#0b6b1d" />
    <polygon points="1226,543 1250,540 1255,550 1263,552 1263,557 1213,555 1213,551 1222,550" fill={PART} />

    {/* 3D cursor */}
    <circle cx="227" cy="620" r="8" fill="none" stroke="#e33" strokeDasharray="3 3" />
    <circle cx="227" cy="620" r="8" fill="none" stroke="#eee" strokeDasharray="3 3" strokeDashoffset="3" />
    <path d="M227 606V616M227 624V634M222 620h1M231 620H241" stroke="#111" />

    {/* axis gizmo */}
    <path d="M248 890V865" stroke="#2a62c4" strokeWidth="2" />
    <path d="M248 890L240 888" stroke="#4ac33c" strokeWidth="2" />
    <path d="M248 890L243 891" stroke="#d33" strokeWidth="2" />
    <text x="250" y="866" fontSize="9" fill="#eee" fontFamily="DejaVu Sans">z</text>
    <text x="229" y="888" fontSize="9" fill="#eee" fontFamily="DejaVu Sans">y</text>
  </Scene3D>
);

/* ---- small helpers ---- */
const PanelHead = ({ title, closed, h, check }) => (
  <Head $h={h}>
    <Caret $closed={closed} />
    {check && <Box><CheckMark /></Box>}
    {title}
    {!check && <Grip />}
  </Head>
);
const NumF = ({ label, value, h, off, v }) => (
  <Num $h={h} $off={off} $v={v}>
    <NumArrow />
    <NumLabel>{label}</NumLabel>
    <NumValue>{value}</NumValue>
    <NumArrow $right />
  </Num>
);
const Xyz = ({ vals, mt, w }) => (
  <Group $mt={mt} $w={w} $round>
    <NumF label="X:" value={vals[0]} />
    <NumF label="Y:" value={vals[1]} />
    <NumF label="Z:" value={vals[2]} />
  </Group>
);
const XyzLock = ({ vals, mt }) => (
  <FieldRow $mt={mt}>
    <Xyz vals={vals} w={110} />
    <LockCol>
      <LockCell><Lock /></LockCell>
      <LockCell><Lock /></LockCell>
      <LockCell><Lock /></LockCell>
    </LockCol>
  </FieldRow>
);
const Check = ({ label, on = true, off, mt }) => (
  <CheckRow $off={off} $mt={mt}>
    <Box $off={off}>{on && <CheckMark />}</Box>
    {label}
  </CheckRow>
);
const Drop = ({ text, w, mt, ml, h }) => (
  <Dropdown $w={w} $mt={mt} $ml={ml} $h={h}>
    <DropText>{text}</DropText>
    <UpDown />
  </Dropdown>
);

const ToolShelf = () => (
  <Shelf>
    <ShelfTop>
      <TabStrip>
        <Tab $h={44} $active>ツール</Tab>
        <Tab $h={42}>作成</Tab>
        <Tab $h={37}>関係</Tab>
        <Tab $h={91}>アニメーション</Tab>
        <Tab $h={59}>物理演算</Tab>
        <Tab $h={104}>グリースペンシル</Tab>
        <Tab $h={53}>Text FX</Tab>
      </TabStrip>
      <ShelfPanel>
        <Section $pb={7}>
          <PanelHead title="トランスフォーム" h={24} />
          <Group $mt={9}>
            <Btn>移動</Btn>
            <Btn>回転</Btn>
            <Btn>拡大縮小</Btn>
          </Group>
          <Group $mt={7}><Btn>ミラー</Btn></Group>
        </Section>
        <Section $pb={8}>
          <PanelHead title="編集" h={24} />
          <Group $mt={9}>
            <Btn>複製</Btn>
            <Btn>リンク複製</Btn>
            <Btn>削除</Btn>
          </Group>
          <Group $mt={7}><Btn>統合</Btn></Group>
          <Drop text="原点を設定" mt={6} h={19} />
          <Label $mt={8}>シェーディング:</Label>
          <Group $row $mt={3}>
            <Btn $v>スムーズ</Btn>
            <Btn $v>フラット</Btn>
          </Group>
          <Label $mt={9}>データ転送:</Label>
          <Group $row $mt={2}>
            <Btn $v>データ</Btn>
            <Btn $v>データレイア...</Btn>
          </Group>
        </Section>
        <Section $last>
          <PanelHead title="履歴" closed h={24} />
        </Section>
      </ShelfPanel>
    </ShelfTop>
    <ShelfPanel $pad={1}>
      <Section $last>
        <PanelHead title="オペレーター" h={26} />
      </Section>
    </ShelfPanel>
  </Shelf>
);

const RightPanel = () => (
  <NPanel>
    <NContent>
      <Section>
        <PanelHead title="トランスフォーム" h={24} />
        <Label $mt={12}>位置:</Label>
        <XyzLock vals={['-3.19401', '2.96732', '-0.03469']} mt={3} />
        <Label $mt={6}>回転:</Label>
        <XyzLock vals={['0.000028°', '1.2°', '-37.4°']} mt={2} />
        <Drop text="XYZ オイラー角" mt={4} />
        <Label $mt={5}>拡大縮小:</Label>
        <XyzLock vals={['0.123', '0.123', '0.475']} mt={3} />
        <Label $mt={7}>寸法:</Label>
        <Xyz vals={['0.06604', '0.06604', '0.37083']} mt={2} />
      </Section>
      <Section $pb={8}>
        <PanelHead title="グリースペンシルレイヤー" check />
        <Group $row $mt={10}>
          <DarkPart $active $h={19}>シーン</DarkPart>
          <DarkPart $h={19}>オブジェクト</DarkPart>
        </Group>
        <Joined $mt={6}>
          <DarkPart $w={31}><Pencil /><UpDown /></DarkPart>
          <DarkPart $light $start>
            <PlusIco />
            <NewBtnText>新規</NewBtnText>
          </DarkPart>
        </Joined>
        <Group $mt={5}><Btn $center>新規レイヤー</Btn></Group>
      </Section>
      <Section>
        <PanelHead title="ビュー" />
        <Group $mt={9} $round><NumF off label="レンズ:" value="35.000" /></Group>
        <Label $mt={5} $off>オブジェクトに注視:</Label>
        <IdField $mt={5}><Cube /><PushRight><Dropper /></PushRight></IdField>
        <Check label="カーソルを注視" on={false} off mt={4} />
        <Check label="カメラをビューにロ..." mt={8} />
        <Label $mt={8}>クリップ:</Label>
        <Group $mt={3} $round>
          <NumF label="開始:" value="0.100" />
          <NumF label="終了:" value="1000.000" />
        </Group>
        <Label $mt={4} $off>ローカルカメラ:</Label>
        <IdField $mt={4}><Cube />Camera.001<PushRight><CrossIco s={11} /></PushRight></IdField>
        <Check label="レンダーボーダー" on={false} off mt={7} />
      </Section>
      <Section $last>
        <PanelHead title="3Dカーソル" />
        <Label $mt={13}>位置:</Label>
        <Xyz vals={['-0.55288', '-3.71597', '0.21034']} mt={3} />
      </Section>
    </NContent>
    <VScroll $top={6} $track={850}><VThumb $h={605} /></VScroll>
  </NPanel>
);

const RestrictCols = ({ eyeOff }) => (
  <>
    <Restrict><Eye off={eyeOff} /></Restrict>
    <Restrict><Cursor /></Restrict>
    <Restrict><RenderCam /></Restrict>
  </>
);

const OutItems = [
  { icon: <VideoCam />, name: 'Active Camera', extra: <><OutSep>|</OutSep><VideoCam dim /></>, eyeOff: true },
  { icon: <VideoCam />, name: 'Camera', extra: <><OutSep>|</OutSep><VideoCam dim /></> },
  { icon: <MeshTri />, name: 'DD_carriage_for_atom' },
  { icon: <Bulb />, name: 'Lamp', extra: <><OutSep>|</OutSep><Bow /></> },
  { icon: <MeshTri />, name: 'X_carriage_lm_ver_a' },
  { icon: <MeshTri />, name: 'X_carriage_lm_ver_b' },
];

const OutlinerPane = () => (
  <Outliner>
    <OutHeader>
      <Hatch $pos="top:0;right:0;" $deg={-45} />
      <Joined><DarkPart $w={31}><OutlinerIco /><UpDown /></DarkPart></Joined>
      <Menu $ml={11}>ビュー</Menu>
      <Menu $ml={22}>検索</Menu>
      <Drop text="全てのシーン" w={118} mt={0} ml={14} h={20} />
    </OutHeader>
    <OutBody>
      <OutRows>
        <OutRow $odd>
          <Tree><TreeLine /></Tree>
          <OutIcon><Globe /></OutIcon>
          <OutName>World</OutName>
          <Restrict />
          <Restrict />
          <Restrict />
        </OutRow>
        {OutItems.map((it, i) => (
          <OutRow key={it.name} $odd={i % 2 === 1}>
            <Tree><ExpandPlus /></Tree>
            <OutIcon>{it.icon}</OutIcon>
            <OutName>{it.name}{it.extra}</OutName>
            <RestrictCols eyeOff={it.eyeOff} />
          </OutRow>
        ))}
      </OutRows>
      <VScroll $top={5} $track={125}><VThumb $h={22} $top={9} /></VScroll>
    </OutBody>
    <HScroll><HThumb /></HScroll>
  </Outliner>
);

const PropertiesPane = () => (
  <>
    <OutHeader>
      <Joined><DarkPart $w={31}><PropsIco /><UpDown /></DarkPart></Joined>
      <PropTabs>
        {PROP_TABS.map((t, i) => <PropTab key={i} $active={i === 0}>{t}</PropTab>)}
      </PropTabs>
    </OutHeader>
    <PropBody>
      <PropContent>
        <SceneRow $pb={0}>
          <Pin />
          <SceneIco />
          <SceneName>Scene</SceneName>
        </SceneRow>
        <Section>
          <PanelHead title="内蔵プレイヤー" />
          <Group $mt={10}><Btn $center>開始</Btn></Group>
          <Label $mt={10}>解像度:</Label>
          <Group $row $mt={8} $round>
            <NumF v label="X:" value="1920 px" h={19} />
            <NumF v label="Y:" value="1080 px" h={19} />
          </Group>
        </Section>
        <Section>
          <PanelHead title="スタンドアローンプレーヤー" />
          <Group $mt={9}><Btn $center>開始</Btn></Group>
          <Label $mt={8}>解像度:</Label>
          <Group $row $mt={9} $round>
            <NumF v label="X:" value="640 px" h={19} />
            <NumF v label="Y:" value="480 px" h={19} />
          </Group>
          <CheckGrid $mt={7}>
            <Check label="全画面" on={false} />
            <Check label="デスクトップ" on={false} off />
          </CheckGrid>
          <Label $mt={9}>品質:</Label>
          <FieldRow $mt={4} $gap={0} $center>
            <RowLabel $w={77}>AAサンプ...</RowLabel>
            <Drop text="オフ" />
          </FieldRow>
          <Group $mt={6} $round>
            <NumF label="ビット深度:" value="32" h={19.5} />
            <NumF label="リフレッシュレート:" value="60" h={19.5} />
          </Group>
        </Section>
        <Section $pb={9}>
          <PanelHead title="ステレオ" />
          <Group $row $mt={10}>
            <DarkPart $active $h={19}>なし</DarkPart>
            <DarkPart>ステレオ</DarkPart>
            <DarkPart>ドーム</DarkPart>
          </Group>
        </Section>
        <Section $pb={9}>
          <PanelHead title="シェーディング" />
          <Group $row $mt={9}>
            <DarkPart $h={19}>マルチテクスチャ</DarkPart>
            <DarkPart $active>GLSL</DarkPart>
          </Group>
          <CheckGrid $mt={7}>
            <Check label="照明" />
            <Check label="カラーランプ" />
            <Check label="シェーダー" />
            <Check label="ノード" />
            <Check label="影" />
            <Check label="追加のテクス..." />
            <Check label="環境照明" />
          </CheckGrid>
        </Section>
        <Section>
          <PanelHead title="システム" />
          <CheckGrid $mt={10}>
            <Check label="フレームレー..." />
            <Check label="ディスプレイ..." />
            <Check label="アニメーショ..." on={false} />
            <span />
            <Check label="マテリアルキ..." />
          </CheckGrid>
          <FieldRow $mt={6} $gap={0} $center>
            <RowLabel $w={77}>VSync:</RowLabel>
            <Drop text="オン" h={20} />
          </FieldRow>
          <FieldRow $mt={6} $gap={0} $center>
            <RowLabel $w={77}>ストレージ:</RowLabel>
            <Drop text="自動選択" />
          </FieldRow>
          <FieldRow $mt={6} $gap={0} $center>
            <RowLabel $w={113}>終了キー</RowLabel>
            <Group $grow>
              <Btn $center $flat>[Esc]</Btn>
            </Group>
          </FieldRow>
        </Section>
        <Section $last>
          <PanelHead title="表示" />
        </Section>
      </PropContent>
      <VScroll $top={6} $track={778}><VThumb $h={442} /></VScroll>
    </PropBody>
  </>
);

const ViewHeader = () => (
  <HeaderBar>
    <Hatch $pos="bottom:1px;left:0;" $deg={45} />
    <Joined $ml={10}>
      <DarkPart $w={30}>
        <svg width="13" height="14" viewBox="0 0 13 14"><path d="M1 2l5.500-1.500L12 2v5q0 4-5.500 6.500Q1 11 1 7Z" fill="#ddd" stroke="#333" strokeWidth=".6" /><path d="M6.500.5V13.500L1 7V2Z" fill="#999" /></svg>
        <UpDown />
      </DarkPart>
    </Joined>
    <Menu $ml={12}>ビュー</Menu>
    <Menu $ml={21}>選択</Menu>
    <Menu $ml={20}>追加</Menu>
    <Menu $ml={20}>オブジェクト</Menu>
    <Joined $ml={11} $w={148}>
      <DarkPart $start><Cube /><Grow>オブジェクトモード</Grow><UpDown /></DarkPart>
    </Joined>
    <Joined $ml={7} $w={30}>
      <DarkPart>
        <svg width="14" height="14" viewBox="0 0 14 14"><circle cx="7" cy="7" r="6" fill="#8a8a8a" stroke="#222" strokeWidth=".5" /><path d="M7 1a6 6 0 0 1 0 12Z" fill="#c05040" /><circle cx="5" cy="5" r="2" fill="#eee" /></svg>
        <UpDown />
      </DarkPart>
    </Joined>
    <Joined $ml={7} $w={51}>
      <DarkPart $w={30}><SceneIco /><UpDown /></DarkPart>
      <SmallPart>
        <svg width="14" height="14" viewBox="0 0 14 14" fill="none" stroke="#eee"><path d="M1 7h12M1 7l3-2M1 7l3 2M13 7l-3-2M13 7l-3 2" /><path d="M2 2h10M2 12h10" strokeDasharray="1 2" /></svg>
      </SmallPart>
    </Joined>
    <Joined $ml={9} $w={169}>
      <SmallPart $w={18}>
        <svg width="16" height="16" viewBox="0 0 16 16" fill="none" strokeWidth="2"><path d="M8 9V2" stroke="#4c82d0" /><path d="M8 9L2 14" stroke="#d24a3a" /><path d="M8 9l6 5" stroke="#6bc03c" /></svg>
      </SmallPart>
      <DarkPart $w={20} $active>
        <svg width="14" height="14" viewBox="0 0 14 14"><path d="M2 12L11 3M11 3H7M11 3v4" fill="none" stroke="#eee" strokeWidth="1.6" /></svg>
      </DarkPart>
      <SmallPart $w={20}>
        <svg width="14" height="14" viewBox="0 0 14 14"><path d="M3 13q0-8 8-10" fill="none" stroke="#4a6c96" strokeWidth="2" /></svg>
      </SmallPart>
      <SmallPart $w={20}>
        <svg width="14" height="14" viewBox="0 0 14 14"><path d="M4 13V3h7" fill="none" stroke="#4c76ac" strokeWidth="2" /><rect x="8" y="1" width="4" height="4" fill="#4c76ac" /></svg>
      </SmallPart>
      <DarkPart $start><Grow $pl={4}>ローカル</Grow><UpDown /></DarkPart>
    </Joined>
    <LayerGrid $ml={3}>
      {Array.from({ length: 10 }).map((_, i) => <LayerCell key={i} />)}
    </LayerGrid>
    <LayerGrid $ml={4}>
      {Array.from({ length: 10 }).map((_, i) => <LayerCell key={i} />)}
    </LayerGrid>
    <Joined $ml={6} $w={19}><SmallPart $w={19}><svg width="12" height="14" viewBox="0 0 12 14"><rect x="1" y="1" width="8" height="12" fill="#444" stroke="#ccc" strokeWidth=".5" /><circle cx="8" cy="9" r="3" fill="none" stroke="#ddd" /></svg></SmallPart></Joined>
    <Joined $ml={6} $w={20}><SmallPart><svg width="14" height="14" viewBox="0 0 14 14"><circle cx="7" cy="7" r="5" fill="none" stroke="#777" strokeWidth="1.4" /></svg></SmallPart></Joined>
    <Joined $ml={6} $w={70}>
      <SmallPart $w={20}><svg width="14" height="14" viewBox="0 0 14 14"><path d="M3 11L9 3a2 2 0 0 1 3 2l-6 8a1.400 1.400 0 0 1-2-1l5-7" fill="none" stroke="#555" strokeWidth="1.2" /></svg></SmallPart>
      <DarkPart $w={30}>
        <svg width="14" height="12" viewBox="0 0 14 12" stroke="#ddd"><path d="M2 1v10M5 3v6M9 3v6M12 1v10" /><path d="M7 1v10" stroke="#5b82c0" /></svg>
        <UpDown />
      </DarkPart>
      <SmallPart $w={20}><svg width="14" height="14" viewBox="0 0 14 14"><circle cx="7" cy="4" r="3" fill="#4c82d0" /><path d="M1 9h12M1 12h12M4 7v7M10 7v7" stroke="#333" /></svg></SmallPart>
    </Joined>
    <Joined $ml={6} $w={39}>
      <SmallPart><svg width="14" height="14" viewBox="0 0 14 14"><rect x="1" y="4" width="12" height="9" fill="#444" stroke="#ddd" strokeWidth=".5" /><circle cx="7" cy="8" r="2.800" fill="#ccc" /><path d="M11 0l.8 2 2 .8-2 .8-.8 2-.8-2-2-.8 2-.8Z" fill="#f2e26a" /></svg></SmallPart>
      <SmallPart><svg width="14" height="14" viewBox="0 0 14 14"><rect x="1" y="5" width="12" height="8" fill="#444" stroke="#ddd" strokeWidth=".5" /><path d="M1 4l11-3 .5 2-11 3Z" fill="#ddd" /></svg></SmallPart>
    </Joined>
  </HeaderBar>
);

const TASK_ICONS = [
  <svg key="a" width="18" height="20" viewBox="0 0 18 20"><path d="M2 5h14v13H2Z" fill="#e9c85c" stroke="#8a6d1f" strokeWidth=".6" /><path d="M4 2h10v8H4Z" fill="#f5f0d8" stroke="#b5a35a" strokeWidth=".5" /><path d="M2 8h14v10H2Z" fill="#3fa7c8" /></svg>,
  <svg key="b" width="16" height="20" viewBox="0 0 16 20"><rect x="1" y="1" width="14" height="18" fill="#f1b05c" stroke="#99601a" strokeWidth=".6" /><circle cx="8" cy="10" r="5" fill="#fdf4e0" stroke="#a06a22" /><path d="M8 7v3h3" fill="none" stroke="#444" /></svg>,
  <svg key="c" width="16" height="20" viewBox="0 0 16 20"><rect x="1" y="1" width="14" height="18" fill="#79b6e6" stroke="#3d79ad" strokeWidth=".6" /><circle cx="8" cy="10" r="5" fill="#f4f8fc" /><path d="M6 7l5 3-5 3Z" fill="#f08a1c" /></svg>,
  <svg key="d" width="14" height="20" viewBox="0 0 14 20"><rect x="1" y="1" width="12" height="18" rx="1" fill="#bcd9ee" stroke="#5e89ad" strokeWidth=".6" /><rect x="3" y="3" width="8" height="3" fill="#e8f2fa" /><path d="M3 8h2v2H3ZM6 8h2v2H6ZM9 8h2v2H9ZM3 11h2v2H3ZM6 11h2v2H6ZM9 11h2v2H9ZM3 14h2v2H3ZM6 14h2v2H6ZM9 14h2v2H9Z" fill="#6d97b8" /></svg>,
  <svg key="e" width="14" height="20" viewBox="0 0 14 20"><ellipse cx="7" cy="10" rx="6" ry="9" fill="#111" /><path d="M7 3q5 3 4 7t-4 6q3-6 0-13Z" fill="#f2f2f2" /></svg>,
  <svg key="f" width="18" height="20" viewBox="0 0 18 20"><path d="M6 2l10-1-2 12-10 6L1 8Z" fill="#111" /><path d="M6 4l8-1-1 5-8 1Z" fill="#e43" /><path d="M4 10l8-1-1 3-8 3Z" fill="#3c4fe0" /><path d="M9 5l3 0-1 3H8Z" fill="#3bc04a" /></svg>,
  <svg key="g" width="16" height="20" viewBox="0 0 16 20"><rect x="1" y="1" width="14" height="18" fill="#fff" stroke="#111" /><path d="M4 5h8L5 14h7" fill="none" stroke="#1a7a30" strokeWidth="2" /><path d="M3 3h10" stroke="#111" /></svg>,
  <svg key="h" width="18" height="20" viewBox="0 0 18 20"><rect x="1" y="1" width="16" height="18" fill="#1212a8" stroke="#111" /><path d="M1 1h4v18H1Z" fill="#222" /><path d="M6 6l2 7 2-7M11 6v7M13 6l3 7M16 6l-3 7" fill="none" stroke="#eee" strokeWidth=".9" /></svg>,
  <BlenderLogo key="i" s={18} />,
  <BlenderLogo key="j" s={18} />,
  <svg key="k" width="16" height="20" viewBox="0 0 16 20"><path d="M3 18L12 2l2 1-7 14Z" fill="#d44" stroke="#333" strokeWidth=".5" /><path d="M3 10q4-6 8-4-4 3-8 8Z" fill="#ccc" stroke="#555" strokeWidth=".5" /></svg>,
  <svg key="l" width="18" height="20" viewBox="0 0 18 20"><circle cx="9" cy="10" r="8" fill="#e8641c" /><circle cx="9" cy="10" r="5" fill="#3a4fc8" /><path d="M3 5q5-3 8 0-6 0-6 6 0 6 8 6-10 3-11-5Z" fill="#f5a522" /></svg>,
  <svg key="m" width="18" height="18" viewBox="0 0 18 18"><circle cx="9" cy="9" r="8" fill="#d8392c" /><path d="M9 9L2 13A8 8 0 0 0 10 17Z" fill="#2fa14a" /><path d="M9 9l7-4a8 8 0 0 1-6 12Z" fill="#f4c20d" /><circle cx="9" cy="9" r="3.600" fill="#3a7bd5" stroke="#fff" /></svg>,
  <svg key="n" width="18" height="18" viewBox="0 0 18 18"><circle cx="9" cy="9" r="8" fill="#1c1c1c" /><circle cx="9" cy="5" r="2" fill="#ccc" /><circle cx="5" cy="11" r="2" fill="#ccc" /><circle cx="13" cy="11" r="2" fill="#ccc" /></svg>,
];

const RULER_TICKS = Array.from({ length: 34 }).map((_, i) => -50 + i * 10);

export default function App() {
  return (
    <Win>
      <GlobalStyle />
      <TitleBar>
        <BlenderLogo s={15} />
        <TitleText>Blender [C:¥Users¥admin_mouse¥Desktop¥ATOM_3DParts.blend]</TitleText>
        <WinBtns>
          <WinBtn>–</WinBtn>
          <WinBtn>▫</WinBtn>
          <WinBtn $close>X</WinBtn>
        </WinBtns>
      </TitleBar>
      <Frame>
        <Blender>
          <HeaderBar $pt={2}>
            <Hatch $pos="top:0;left:0;" $deg={45} />
            <Hatch $pos="top:0;right:0;" $deg={-45} />
            <Joined $ml={9}><DarkPart $w={30}><InfoIco /><UpDown /></DarkPart></Joined>
            <Menu $ml={12}>ファイル</Menu>
            <Menu $ml={18}>ゲーム</Menu>
            <Menu $ml={21}>ウィンドウ</Menu>
            <Menu $ml={20}>ヘルプ</Menu>
            <Joined $ml={14}>
              <DarkPart $w={29}><LayoutIco /><UpDown /></DarkPart>
              <TextPart $w={120}>Default</TextPart>
              <SmallPart><PlusIco /></SmallPart>
              <SmallPart><CrossIco /></SmallPart>
            </Joined>
            <Joined $ml={3}>
              <DarkPart $w={31}><SceneIco /><UpDown /></DarkPart>
              <TextPart $w={121}>Scene</TextPart>
              <SmallPart><PlusIco /></SmallPart>
              <SmallPart><CrossIco /></SmallPart>
            </Joined>
            <Drop text="Blenderゲーム" w={117} mt={0} ml={16} h={20} />
            <LogoSlot><BlenderLogo /></LogoSlot>
            <Stats>v2.79 | 頂点:15,821 | 面:31,965 | 三角面:31,972 | オブジェクト:1/33 | ランプ:0/1 | メモリ:24.50M | walker</Stats>
          </HeaderBar>
          <MainRow>
            <MainCol>
              <ViewRow>
                <ToolShelf />
                <Viewport>
                  <Scene />
                  <ViewCaption $x={18} $y={9}>カメラ・透視投影</ViewCaption>
                  <ViewCaption $x={69} $y={838}>(1) walker</ViewCaption>
                </Viewport>
                <RightPanel />
              </ViewRow>
              <ViewHeader />
              <Timeline>
                <OutRange $w={281} />
                <FrameLine />
                <OutRange $w={1206} $clear />
                <OutRange />
              </Timeline>
              <Ruler>
                {RULER_TICKS.map(t => <Tick key={t} $neg={t < 0}>{t}</Tick>)}
              </Ruler>
              <BottomScroll />
            </MainCol>
            <RightCol>
              <OutlinerPane />
              <PropertiesPane />
            </RightCol>
          </MainRow>
        </Blender>
      </Frame>
      <Taskbar>
        <StartOrb>
          <svg width="20" height="20" viewBox="0 0 20 20">
            <path d="M2 4l7-1v6H2Z" fill="#e8552c" />
            <path d="M10 3l8-1v7h-8Z" fill="#7fbf3a" />
            <path d="M2 10h7v6l-7-1Z" fill="#3a90d8" />
            <path d="M10 10h8v7l-8-1Z" fill="#f4c020" />
          </svg>
        </StartOrb>
        {TASK_ICONS.map((ico, i) => (
          <TaskItem key={i} $open={[0, 12, 13].includes(i)} $active={i === 9}>{ico}</TaskItem>
        ))}
        <Tray>
          <TrayIcon><svg width="10" height="16" viewBox="0 0 10 16"><path d="M5 1L9 15H7L6 11H4L3 15H1Z" fill="#f8fafc" stroke="#445" strokeWidth=".5" /></svg></TrayIcon>
          <TrayIcon><svg width="14" height="16" viewBox="0 0 14 16"><path d="M2 2l4 5 6 7-2 1-6-7-3-4Z" fill="#d0e0f0" stroke="#405a7a" strokeWidth=".6" /></svg></TrayIcon>
          <TrayIcon><svg width="16" height="16" viewBox="0 0 16 16"><circle cx="7" cy="8" r="6" fill="#1f6fd0" /><circle cx="12" cy="12" r="3" fill="#f0a020" /></svg></TrayIcon>
          <TrayIcon><svg width="16" height="16" viewBox="0 0 16 16"><circle cx="8" cy="8" r="7" fill="#1c3fa8" stroke="#dfe8f2" /><path d="M6 6q2-3 4 0t-2 4M8 11.500v1" fill="none" stroke="#fff" strokeWidth="1.400" /></svg></TrayIcon>
          <TrayText>CAPS&nbsp;&nbsp;あ<br />KANA ▾</TrayText>
          <TrayIcon $w={24}><svg width="9" height="7" viewBox="0 0 9 7"><path d="M4.500 0L9 7H0Z" fill="#f0f4f8" /></svg></TrayIcon>
          <TrayIcon $w={25}><svg width="14" height="16" viewBox="0 0 14 16"><path d="M2 1v14" stroke="#f0f4f8" /><path d="M3 2h9l-2 3 2 3H3Z" fill="#f0f4f8" /></svg></TrayIcon>
          <TrayIcon $w={24}><svg width="14" height="16" viewBox="0 0 14 16"><rect x="3" y="1" width="6" height="9" fill="none" stroke="#f0f4f8" strokeWidth="1.400" /><path d="M1 12h10M6 10v5" stroke="#f0f4f8" strokeWidth="1.400" /></svg></TrayIcon>
          <TrayIcon $w={22}><svg width="14" height="16" viewBox="0 0 14 16"><path d="M1 6h3l4-4v12l-4-4H1Z" fill="#f0f4f8" /><path d="M10 5q2 3 0 6" fill="none" stroke="#f0f4f8" /></svg></TrayIcon>
          <Clock>15:17</Clock>
          <ShowDesktop />
        </Tray>
      </Taskbar>
    </Win>
  );
}
